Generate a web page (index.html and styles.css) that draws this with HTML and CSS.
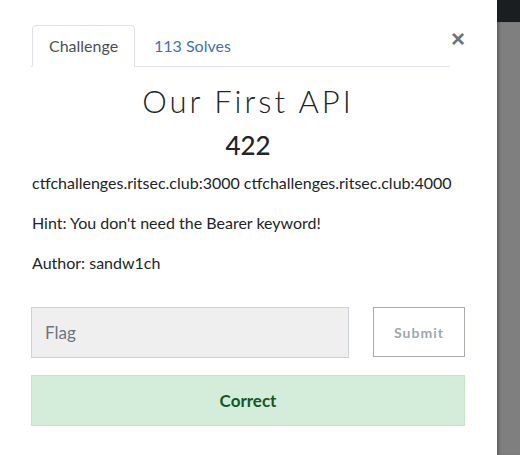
FILE: index.html
```html
<!DOCTYPE html>
<html>
<head>
<meta charset="utf-8">
<link rel="stylesheet" href="styles.css">
</head>
<body>
<div class="modal">
  <div class="header">
    <ul class="tabs">
      <li class="tab active">Challenge</li>
      <li class="tab link">113 Solves</li>
    </ul>
    <div class="close">&times;</div>
  </div>
  <h2 class="title">Our First API</h2>
  <h3 class="value">422</h3>
  <p class="desc">ctfchallenges.ritsec.club:3000 ctfchallenges.ritsec.club:4000</p>
  <p class="desc">Hint: You don't need the Bearer keyword!</p>
  <p class="desc">Author: sandw1ch</p>
  <div class="form">
    <input class="flag" type="text" placeholder="Flag">
    <button class="submit">Submit</button>
  </div>
  <div class="result">Correct</div>
</div>
<div class="backdrop">
  <div class="topbar"></div>
  <div class="shade"></div>
</div>
</body>
</html>
```
FILE: styles.css
```css
html, body {
  margin: 0;
  height: 455px;
  overflow: hidden;
}
body {
  display: flex;
  font-family: Lato, "Open Sans", sans-serif;
  color: #212529;
}
.modal {
  width: 497px;
  height: 455px;
  background: #fff;
  box-sizing: border-box;
  padding: 25px 32px 0 31px;
}
.header {
  display: flex;
  align-items: flex-start;
}
.tabs {
  flex: 1;
  display: flex;
  list-style: none;
  margin: 0;
  padding: 0 0 0 1px;
  border-bottom: 1px solid #dee2e6;
}
.tab {
  height: 40px;
  line-height: 40px;
  padding: 0 16px;
  font-size: 16px;
  margin-bottom: -1px;
  border: 1px solid transparent;
  border-radius: 4px 4px 0 0;
}
.tab.active {
  border-color: #dee2e6 #dee2e6 #fff;
  color: #495057;
  width: 69px;
  white-space: nowrap;
}
.tab.link {
  color: #3b73b9;
  padding-left: 18px;
}
.close {
  width: 14px;
  margin-left: 1px;
  margin-top: 2px;
  font-size: 24px;
  line-height: 24px;
  font-weight: 700;
  color: #6c757d;
  font-family: "Liberation Sans", sans-serif;
}
.title {
  margin: 16px 0 0;
  text-align: center;
  font-size: 31px;
  font-weight: 300;
  letter-spacing: 3px;
  line-height: 36px;
  color: #212529;
}
.value {
  margin: 10px 0 0;
  text-align: center;
  font-size: 26px;
  font-weight: 500;
  line-height: 32px;
}
.desc {
  margin: 11px 0 0 1px;
  font-size: 16px;
  line-height: 22px;
}
.desc + .desc {
  margin-top: 18px;
}
.form {
  display: flex;
  gap: 24px;
  margin-top: 33px;
}
.flag {
  width: 318px;
  height: 51px;
  box-sizing: border-box;
  margin: 0;
  background: #efefef;
  border: 1px solid #ccd2d8;
  padding: 0 13px;
  font-family: Lato, sans-serif;
  font-size: 17px;
  outline: none;
}
.flag::placeholder {
  color: #6c757d;
}
.submit {
  width: 92px;
  height: 50px;
  background: #fff;
  border: 1px solid #a8acb0;
  border-radius: 0;
  color: #a0a7ae;
  font-family: Lato, sans-serif;
  font-weight: 700;
  font-size: 14px;
  letter-spacing: 1px;
  padding: 0;
}
.result {
  margin-top: 17px;
  width: 434px;
  height: 51px;
  box-sizing: border-box;
  background: #d4edda;
  border: 1px solid #c3e6cb;
  color: #155724;
  font-weight: 700;
  font-size: 17px;
  display: flex;
  align-items: center;
  justify-content: center;
}
.backdrop {
  flex: 1;
  display: flex;
  flex-direction: column;
}
.topbar {
  height: 22px;
  background: #1b1e21;
}
.shade {
  flex: 1;
  background: #7f7f7f;
  box-shadow: inset 3px 0 3px -1px rgba(0,0,0,0.25);
}
```
